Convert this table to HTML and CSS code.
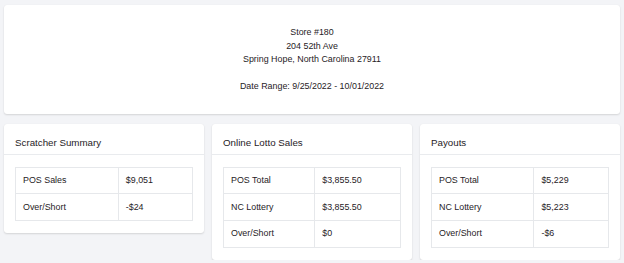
FILE: index.html
```html
<!DOCTYPE html>
<html lang="en">
<head>
<meta charset="utf-8">
<title>Store Summary</title>
<link rel="stylesheet" href="styles.css">
</head>
<body>
<div class="page">
  <section class="info-card">
    <p>Store #180</p>
    <p>204 52th Ave</p>
    <p>Spring Hope, North Carolina 27911</p>
    <p class="blank">&nbsp;</p>
    <p>Date Range: 9/25/2022 - 10/01/2022</p>
  </section>
  <div class="cards">
    <section class="card">
      <h2 class="card-title">Scratcher Summary</h2>
      <div class="card-body">
        <table class="data">
          <tr><td>POS Sales</td><td>$9,051</td></tr>
          <tr><td>Over/Short</td><td>-$24</td></tr>
        </table>
      </div>
    </section>
    <section class="card">
      <h2 class="card-title">Online Lotto Sales</h2>
      <div class="card-body">
        <table class="data">
          <tr><td>POS Total</td><td>$3,855.50</td></tr>
          <tr><td>NC Lottery</td><td>$3,855.50</td></tr>
          <tr><td>Over/Short</td><td>$0</td></tr>
        </table>
      </div>
    </section>
    <section class="card">
      <h2 class="card-title">Payouts</h2>
      <div class="card-body">
        <table class="data">
          <tr><td>POS Total</td><td>$5,229</td></tr>
          <tr><td>NC Lottery</td><td>$5,223</td></tr>
          <tr><td>Over/Short</td><td>-$6</td></tr>
        </table>
      </div>
    </section>
  </div>
</div>
</body>
</html>
```

FILE: styles.css
```css
html, body {
  margin: 0;
  padding: 0;
  background: #f3f4f7;
}
body {
  font-family: "Liberation Sans", Arial, sans-serif;
  color: #1f2226;
  font-size: 8.9px;
  line-height: 13.5px;
}
.page {
  padding: 5px 4px 0;
}
.info-card {
  background: #fff;
  border-radius: 3px;
  box-shadow: 0 1px 2px rgba(0, 0, 0, 0.13), 0 0 1px rgba(0, 0, 0, 0.06);
  padding: 21px 0 20px;
  text-align: center;
}
.info-card p {
  margin: 0;
}
.cards {
  margin-top: 10px;
  display: grid;
  grid-template-columns: repeat(3, 1fr);
  column-gap: 8px;
  align-items: start;
}
.card {
  background: #fff;
  border-radius: 3px;
  box-shadow: 0 1px 2px rgba(0, 0, 0, 0.13), 0 0 1px rgba(0, 0, 0, 0.06);
}
.card-title {
  margin: 0;
  font-weight: normal;
  font-size: 9.75px;
  line-height: 15px;
  padding: 11px 11px 4px;
  border-bottom: 1px solid #e9ebee;
}
.card-body {
  padding: 12px 11px 12px;
}
.data {
  width: 100%;
  border-collapse: collapse;
}
.data td {
  border: 1px solid #e6e8eb;
  padding: 6.2px 7px;
  white-space: nowrap;
}
```
